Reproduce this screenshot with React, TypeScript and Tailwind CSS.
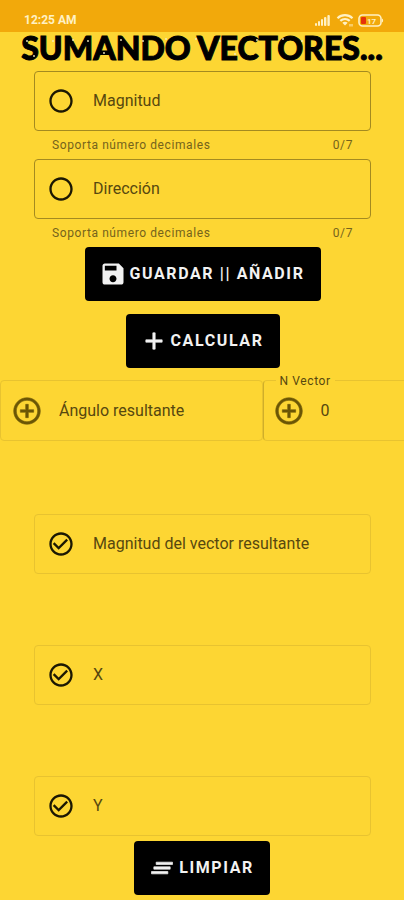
import type { ReactNode } from "react";

const iconPaths = {
  circle:
    "M12 2C6.48 2 2 6.48 2 12s4.48 10 10 10 10-4.48 10-10S17.52 2 12 2zm0 18c-4.42 0-8-3.58-8-8s3.58-8 8-8 8 3.58 8 8-3.58 8-8 8z",
  check:
    "M16.59 7.58L10 14.17l-3.59-3.58L5 12l5 5 8-8-1.41-1.42zM12 2C6.48 2 2 6.48 2 12s4.48 10 10 10 10-4.48 10-10S17.52 2 12 2zm0 18c-4.42 0-8-3.58-8-8s3.58-8 8-8 8 3.58 8 8-3.58 8-8 8z",
  addCircle:
    "M13 7h-2v4H7v2h4v4h2v-4h4v-2h-4V7zm-1-5C6.48 2 2 6.48 2 12s4.48 10 10 10 10-4.48 10-10S17.52 2 12 2zm0 18c-4.41 0-8-3.59-8-8s3.59-8 8-8 8 3.59 8 8-3.59 8-8 8z",
  save:
    "M17 3H5c-1.11 0-2 .9-2 2v14c0 1.1.89 2 2 2h14c1.1 0 2-.9 2-2V7l-4-4zm-5 16c-1.66 0-3-1.34-3-3s1.34-3 3-3 3 1.34 3 3-1.34 3-3 3zm3-10H5V5h10v4z",
  plus: "M19 13h-6v6h-2v-6H5v-2h6V5h2v6h6v2z",
  clear: "M5 13h14v-2H5v2zm-2 4h14v-2H3v2zM7 7v2h14V7H7z",
};

function Icon({ name, className }: { name: keyof typeof iconPaths; className: string }) {
  return (
    <svg viewBox="0 0 24 24" fill="currentColor" aria-hidden="true" className={`shrink-0 ${className}`}>
      <path d={iconPaths[name]} />
    </svg>
  );
}

function StatusBar() {
  return (
    <div className="flex h-8 items-end justify-between bg-[#f2a90b] pr-5 pl-6 text-[#fff1c4]">
      <span className="pb-1 text-xs leading-4 font-bold">12:25 AM</span>
      <div className="flex items-center gap-1 pb-1">
        <svg viewBox="0 0 18 14" className="h-4 w-[18px]" fill="currentColor" aria-hidden="true">
          <rect x="1" y="10" width="2" height="3" rx="1" />
          <rect x="4" y="8" width="2" height="5" rx="1" />
          <rect x="7" y="6" width="2" height="7" rx="1" />
          <rect x="10" y="4" width="2.4" height="9" rx="1" />
          <rect x="13.4" y="2" width="2.4" height="11" rx="1" />
        </svg>
        <svg viewBox="0 0 18 14" className="h-4 w-[18px]" fill="none" stroke="currentColor" strokeWidth="2.2" aria-hidden="true">
          <path d="M1.5 5.2C5.8 1.2 12.2 1.2 16.5 5.2" />
          <path d="M4.3 7.9C7 5.5 11 5.5 13.700 7.9" />
          <path d="M6.3 9.7L9 12.6L11.7 9.7C10 8.3 8 8.3 6.3 9.7Z" fill="currentColor" stroke="none" />
          <path d="M14 11v2.5M16 11v2.5" strokeWidth="1" />
        </svg>
        <svg viewBox="0 0 26 14" className="h-4 w-[26px]" aria-hidden="true">
          <rect x="1" y="2" width="22" height="11" rx="3.5" fill="none" stroke="currentColor" strokeWidth="1.6" />
          <path d="M24 5.5c1.5.5 1.5 3.500 0 4z" fill="currentColor" />
          <rect x="3" y="4" width="5" height="7" rx="1" fill="#e5320c" />
          <text x="9" y="10.5" fontSize="8" fontFamily="Roboto, sans-serif" fontWeight="700" fill="currentColor">17</text>
        </svg>
      </div>
    </div>
  );
}

type FieldProps = { id: string; label: string; icon: "circle" | "check"; strong?: boolean };

function Field({ id, label, icon, strong }: FieldProps) {
  return (
    <div
      className={`flex h-[60px] items-center rounded border px-3 ${
        strong ? "border-[#a48a20]" : "border-[#e8c330]"
      }`}
    >
      <Icon name={icon} className="size-7 text-[#1c1803]" />
      <label htmlFor={id} className="ml-[18px] shrink-0 text-base text-[#57480f]">
        {label}
      </label>
      <input id={id} type="text" readOnly={!strong} maxLength={7} className="w-0 min-w-0 flex-1 bg-transparent pl-2 text-base outline-none" />
    </div>
  );
}

function EntryField({ id, label }: { id: string; label: string }) {
  return (
    <div>
      <Field id={id} label={label} icon="circle" strong />
      <div className="flex h-7 items-center justify-between px-[18px] text-xs tracking-wider text-[#75631c]">
        <span>Soporta número decimales</span>
        <span>0/7</span>
      </div>
    </div>
  );
}

function ActionButton({ icon, children }: { icon: "save" | "plus" | "clear"; children: ReactNode }) {
  return (
    <button
      type="button"
      className="flex h-[54px] items-center gap-[3px] rounded bg-black pr-4 pl-[14px] text-base font-bold tracking-widest text-[#f2f2f2]"
    >
      <Icon
        name={icon}
        className={icon === "save" ? "size-7" : "size-7 stroke-current [stroke-width:0.6px]"}
      />
      {children}
    </button>
  );
}

const glints = [
  [27, 9], [34, 24], [53, 9], [73, 8], [88, 9], [104, 21], [121, 8], [143, 9], [166, 7],
  [196, 7], [220, 9], [235, 22], [257, 8], [283, 7], [302, 9], [321, 21], [342, 8],
];

function Title() {
  return (
    <div className="relative mx-auto h-[39px] w-[404px] max-w-full">
      <h1 className="text-center font-['Lato',sans-serif] text-[32px] leading-8 font-black whitespace-nowrap text-black [-webkit-text-stroke:1px_#000]">
        SUMANDO VECTORES...
      </h1>
      <svg viewBox="0 0 404 39" className="pointer-events-none absolute inset-0 h-full w-full" fill="#f6ecc0" aria-hidden="true">
        {glints.map(([x, y]) => (
          <circle key={x} cx={x} cy={y} r="0.9" />
        ))}
      </svg>
    </div>
  );
}

export default function App() {
  return (
    <div className="min-h-screen bg-[#fdd633] font-['Roboto','Noto_Sans',sans-serif]">
      <StatusBar />
      <main className="flex flex-col">
        <Title />
        <form className="flex flex-col pr-[33px] pl-[34px]">
          <EntryField id="magnitud" label="Magnitud" />
          <EntryField id="direccion" label="Dirección" />
          <div className="flex flex-col items-center gap-[13px]">
            <ActionButton icon="save">GUARDAR || AÑADIR</ActionButton>
            <ActionButton icon="plus">CALCULAR</ActionButton>
          </div>
        </form>

        <section className="mt-3 flex">
          <div className="flex h-[61px] w-[65%] shrink-0 items-center rounded border border-[#e8c330] pl-[10px]">
            <Icon name="addCircle" className="size-8 stroke-current text-[#6b5605] [stroke-width:0.4px]" />
            <label htmlFor="angulo" className="ml-4 shrink-0 text-base text-[#57480f]">
              Ángulo resultante
            </label>
            <input id="angulo" type="text" readOnly className="w-0 min-w-0 flex-1 bg-transparent pl-2 text-base outline-none" />
          </div>
          <div className="relative flex h-[61px] min-w-0 flex-1 items-center rounded-l border border-r-0 border-[#e8c330] border-l-[#cfae2a] pl-[9px]">
            <label htmlFor="n-vector" className="absolute -top-2 left-3 bg-[#fdd633] px-1 text-xs leading-4 tracking-wider text-[#57480f]">
              N Vector
            </label>
            <Icon name="addCircle" className="size-8 stroke-current text-[#6b5605] [stroke-width:0.4px]" />
            <input id="n-vector" type="text" readOnly defaultValue="0" className="ml-4 w-0 min-w-0 flex-1 bg-transparent text-base text-[#57480f] outline-none" />
          </div>
        </section>

        <section className="mt-[73px] flex flex-col gap-[71px] pr-[33px] pl-[34px]">
          <Field id="resultante" label="Magnitud del vector resultante" icon="check" />
          <Field id="x" label="X" icon="check" />
          <Field id="y" label="Y" icon="check" />
        </section>
        <div className="mt-[5px] flex justify-center pb-1">
          <ActionButton icon="clear">LIMPIAR</ActionButton>
        </div>
      </main>
    </div>
  );
}
